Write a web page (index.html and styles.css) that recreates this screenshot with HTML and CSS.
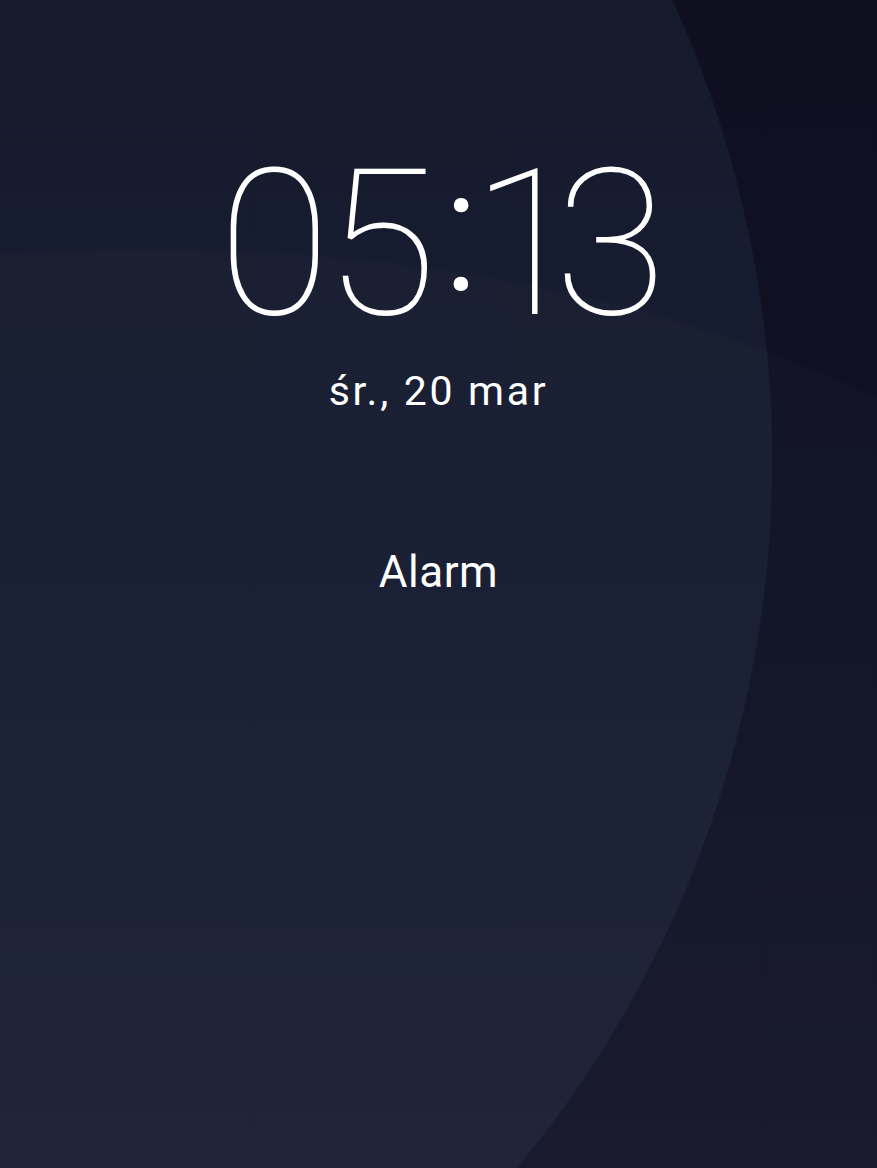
FILE: index.html
```html
<!DOCTYPE html>
<html lang="pl">
<head>
<meta charset="utf-8">
<title>Alarm</title>
<link rel="stylesheet" href="styles.css">
</head>
<body>
<main class="lock">
  <div class="clock"><span class="d0">0</span><span class="d5">5</span><span class="colon">:</span><span class="d1">1</span><span class="d3">3</span></div>
  <div class="date">śr., 20 mar</div>
  <div class="label">Alarm</div>
</main>
</body>
</html>
```

FILE: styles.css
```css
html, body {
  margin: 0;
  padding: 0;
}

body {
  width: 877px;
  height: 1168px;
  overflow: hidden;
  font-family: Roboto, "Noto Sans", sans-serif;
  color: #ffffff;
  background:
    radial-gradient(ellipse 1060px 546px at 150px 793px, rgba(255, 255, 255, 0.016) 99.3%, rgba(255, 255, 255, 0) 100%),
    radial-gradient(circle 1110px at -337px 460px, rgba(100, 140, 180, 0.09) 99.85%, rgba(100, 140, 180, 0) 100%),
    linear-gradient(to bottom, #0f0f20 0%, #0f1225 50%, #16172b 100%);
}

.lock {
  display: flex;
  flex-direction: column;
  align-items: center;
  padding-top: 142px;
}

.clock {
  font-size: 205px;
  font-weight: 250;
  line-height: 1;
  white-space: nowrap;
  padding-left: 8px;
}

.d0 {
  letter-spacing: -6px;
}

.colon {
  margin-left: 6px;
  letter-spacing: -8px;
  font-size: 175px;
  font-weight: 300;
  vertical-align: 24px;
}

.d1 {
  letter-spacing: -29px;
}

.date {
  margin-top: 24px;
  font-size: 41px;
  font-weight: 400;
  line-height: 1;
  letter-spacing: 2.7px;
}

.label {
  margin-top: 138px;
  font-size: 44px;
  font-weight: 400;
  line-height: 1;
  letter-spacing: 0.5px;
}
```
